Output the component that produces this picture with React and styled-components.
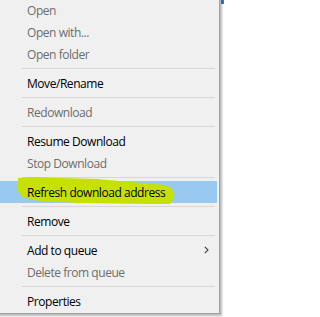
import React from "react";
import styled, { createGlobalStyle } from "styled-components";

const Global = createGlobalStyle`
  html, body { margin: 0; padding: 0; background: #ffffff; overflow: hidden; }
  #root { width: 224px; height: 317px; position: relative; overflow: hidden; }
`;

const Corner = styled.div`
  position: absolute;
  top: 0;
  right: 0;
  width: 3px;
  height: 4px;
  background: #2a7fd0;
`;

const Menu = styled.div`
  position: relative;
  margin: -4px 0 0 -8px;
  width: 228px;
  box-sizing: border-box;
  background: #f0f0f0;
  border: 1px solid #a0a0a0;
  padding: 2px 2px 1px 2px;
  box-shadow: 2px 2px 2px rgba(0, 0, 0, 0.28);
  font-family: "Open Sans", "Noto Sans", sans-serif;
  font-size: 12px;
`;

const Item = styled.div`
  position: relative;
  height: 22px;
  display: flex;
  align-items: center;
  padding-left: 32px;
  padding-right: 8px;
  color: ${(p) => (p.$disabled ? "#6d6d6d" : "#000000")};
  background: ${(p) => (p.$active ? "#99c9ef" : "transparent")};
`;

const Label = styled.span`
  position: relative;
  z-index: 1;
  flex: 1;
  white-space: nowrap;
  letter-spacing: -0.45px;
`;

const Separator = styled.div`
  height: 7px;
  display: flex;
  align-items: center;
  padding: 0 2px 0 27px;
  &::after {
    content: "";
    flex: 1;
    height: 1px;
    background: #d7d7d7;
  }
`;

const Marker = styled.svg`
  position: absolute;
  left: 5px;
  top: -5px;
  overflow: visible;
  z-index: 0;
`;

const Chevron = styled.svg`
  flex: none;
`;

function Row({ children, disabled, active, sub, marker }) {
  return (
    <Item $disabled={disabled} $active={active}>
      {marker && (
        <Marker width="180" height="32" viewBox="0 -5 180 32">
          <path
            d="M18,-3 L30,-4 L97,-2 L130,1 L165,4 L172,8 L174,16 L170,23 L150,23 L80,22 L40,20 L22,16 L18,10 Z"
            fill="#c6e000"
          />
        </Marker>
      )}
      <Label>{children}</Label>
      {sub && (
        <Chevron width="5" height="8" viewBox="0 0 5 8">
          <polyline points="0.8,0.8 4,4 0.8,7.2" fill="none" stroke="#404040" strokeWidth="1.1" />
        </Chevron>
      )}
    </Item>
  );
}

export default function App() {
  return (
    <>
      <Global />
      <Corner />
      <Menu>
        <Row disabled>Open</Row>
        <Row disabled>Open with...</Row>
        <Row disabled>Open folder</Row>
        <Separator />
        <Row>Move/Rename</Row>
        <Separator />
        <Row disabled>Redownload</Row>
        <Separator />
        <Row>Resume Download</Row>
        <Row disabled>Stop Download</Row>
        <Separator />
        <Row active marker>Refresh download address</Row>
        <Separator />
        <Row>Remove</Row>
        <Separator />
        <Row sub>Add to queue</Row>
        <Row disabled>Delete from queue</Row>
        <Separator />
        <Row>Properties</Row>
      </Menu>
    </>
  );
}
